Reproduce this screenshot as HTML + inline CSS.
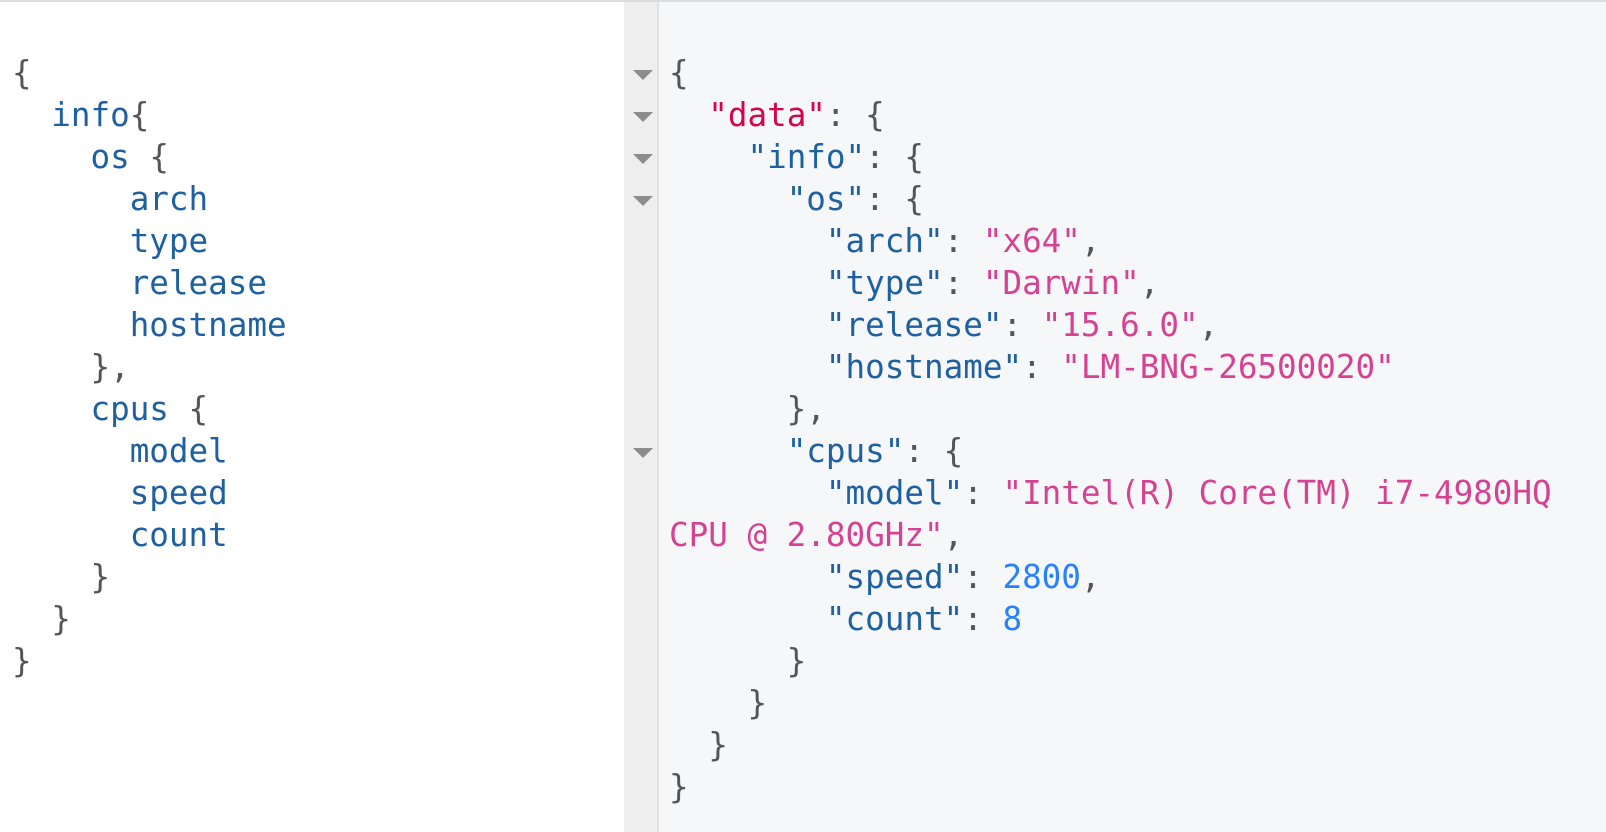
<!DOCTYPE html>
<html><head><meta charset="utf-8"><style>
html,body{margin:0;padding:0;width:1606px;height:832px;overflow:hidden;background:#fff;font-family:"DejaVu Sans Mono",monospace;}
.top{position:absolute;left:0;top:0;width:1606px;height:2px;background:#dcdcdc;}
.left{position:absolute;left:0;top:2px;width:624px;height:830px;background:#fff;}
.gutter{position:absolute;left:624px;top:2px;width:33px;height:830px;background:#eeeeee;border-right:2px solid #e0e0e0;}
.right{position:absolute;left:659px;top:2px;width:947px;height:830px;background:#f6f7f9;}
pre{position:absolute;margin:0;font-family:"DejaVu Sans Mono",monospace;font-size:32.6px;line-height:42px;color:#555;white-space:pre;}
.k{color:#1f61a0}.s{color:#d64292}.d{color:#d2054e}.n{color:#2882f9}
.tri{position:absolute;left:633px;width:0;height:0;border-left:10px solid transparent;border-right:10px solid transparent;border-top:10px solid #8c8c8c;}
</style></head><body>
<div class="top"></div>
<div class="left"></div>
<div class="gutter"></div>
<div class="right"></div>
<div class="tri" style="top:70px"></div>
<div class="tri" style="top:112px"></div>
<div class="tri" style="top:154px"></div>
<div class="tri" style="top:196px"></div>
<div class="tri" style="top:448px"></div>
<pre style="left:12px;top:52px">{
  <span class="k">info</span>{
    <span class="k">os</span> {
      <span class="k">arch</span>
      <span class="k">type</span>
      <span class="k">release</span>
      <span class="k">hostname</span>
    },
    <span class="k">cpus</span> {
      <span class="k">model</span>
      <span class="k">speed</span>
      <span class="k">count</span>
    }
  }
}</pre>
<pre style="left:669px;top:52px">{
  <span class="d">"data"</span>: {
    <span class="k">"info"</span>: {
      <span class="k">"os"</span>: {
        <span class="k">"arch"</span>: <span class="s">"x64"</span>,
        <span class="k">"type"</span>: <span class="s">"Darwin"</span>,
        <span class="k">"release"</span>: <span class="s">"15.6.0"</span>,
        <span class="k">"hostname"</span>: <span class="s">"LM-BNG-26500020"</span>
      },
      <span class="k">"cpus"</span>: {
        <span class="k">"model"</span>: <span class="s">"Intel(R) Core(TM) i7-4980HQ</span>
<span class="s">CPU @ 2.80GHz"</span>,
        <span class="k">"speed"</span>: <span class="n">2800</span>,
        <span class="k">"count"</span>: <span class="n">8</span>
      }
    }
  }
}</pre>
</body></html>
